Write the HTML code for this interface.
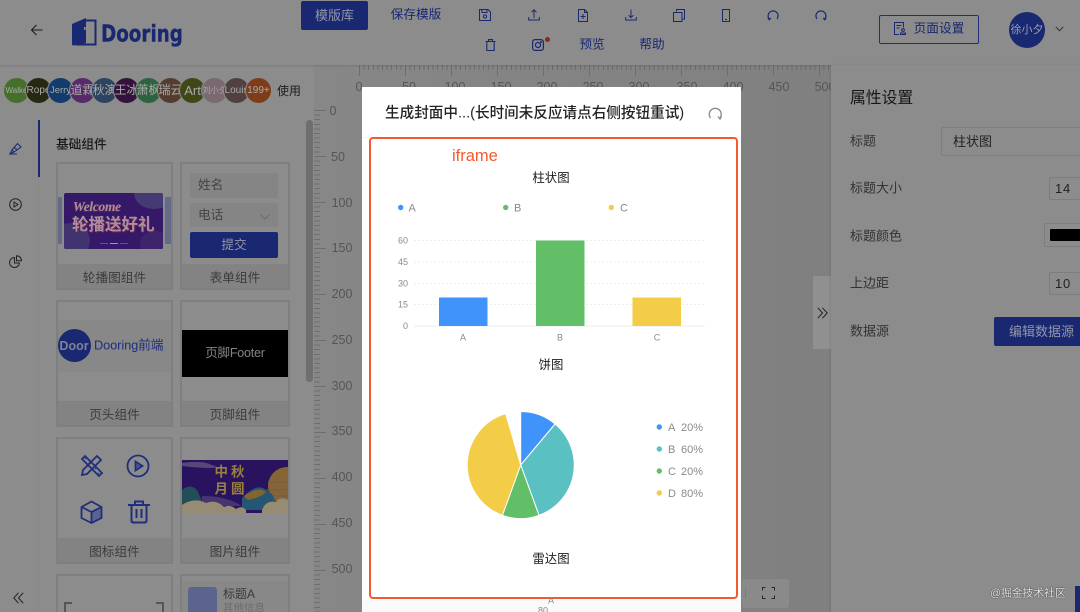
<!DOCTYPE html>
<html><head><meta charset="utf-8">
<style>
*{box-sizing:border-box;margin:0;padding:0}
html,body{width:1080px;height:612px;overflow:hidden;background:#8c8c8c;font-family:"Liberation Sans","Noto Sans CJK SC",sans-serif}
#root{position:relative;width:1080px;height:612px;overflow:hidden;background:#8c8c8c;filter:blur(.35px)}
.a{position:absolute;white-space:nowrap}
.t{position:absolute;white-space:nowrap;line-height:1;transform:translate(-50%,-50%)}
.l{position:absolute;white-space:nowrap;line-height:1;transform:translateY(-50%)}
.blue{color:#192870}
.card{position:absolute;border:2px solid #7f7f7f;background:#8c8c8c;overflow:hidden}
.strip{position:absolute;left:0;right:0;bottom:0;height:24px;background:#838383;color:#3c3c3c;font-size:12.7px;text-align:center;line-height:28px}
.av{position:absolute;top:77px;width:27px;height:27px;border-radius:50%;border:1px solid #8c8c8c;color:#aaa;font-size:11px;line-height:25px;overflow:hidden;text-align:center;white-space:nowrap}
svg{position:absolute;overflow:visible}
.rl{position:absolute;font-size:12.5px;color:#555;line-height:1;transform:translate(-50%,-50%)}
.gy{color:#333;font-size:13px}
.inp{position:absolute;border:1px solid #7d7d7d;border-radius:2px;background:#8c8c8c;color:#222;font-size:13px}
</style></head><body><div id="root">

<!-- canvas -->
<div class="a" style="left:314px;top:65px;width:517px;height:547px;background:linear-gradient(90deg,#878787,#828282 70%,#808080)"></div>

<!-- top ruler -->
<div class="a" style="left:359px;top:65px;width:472px;height:5px;background:repeating-linear-gradient(90deg,#6d6d6d 0 1px,transparent 1px 4.6px)"></div>
<div class="a" style="left:359px;top:65px;width:472px;height:11px;background:repeating-linear-gradient(90deg,#6d6d6d 0 1px,transparent 1px 46px)"></div>
<div class="rl" style="left:359px;top:87px">0</div><div class="rl" style="left:409px;top:87px">50</div><div class="rl" style="left:455px;top:87px">100</div><div class="rl" style="left:501px;top:87px">150</div><div class="rl" style="left:547px;top:87px">200</div><div class="rl" style="left:593px;top:87px">250</div><div class="rl" style="left:639px;top:87px">300</div><div class="rl" style="left:687px;top:87px">350</div><div class="rl" style="left:733px;top:87px">400</div><div class="rl" style="left:779px;top:87px">450</div><div class="rl" style="left:825px;top:87px;clip-path:inset(0 5px 0 0)">500</div>

<!-- left ruler -->
<div class="a" style="left:314px;top:110px;width:6px;height:502px;background:repeating-linear-gradient(180deg,#6f6f6f 0 1px,transparent 1px 4.6px)"></div>
<div class="a" style="left:314px;top:110px;width:12px;height:502px;background:repeating-linear-gradient(180deg,#6f6f6f 0 1px,transparent 1px 46px)"></div>
<div class="rl" style="left:333px;top:111px">0</div><div class="rl" style="left:338px;top:157px">50</div><div class="rl" style="left:342px;top:203px">100</div><div class="rl" style="left:342px;top:248px">150</div><div class="rl" style="left:342px;top:294px">200</div><div class="rl" style="left:342px;top:340px">250</div><div class="rl" style="left:342px;top:386px">300</div><div class="rl" style="left:342px;top:431px">350</div><div class="rl" style="left:342px;top:477px">400</div><div class="rl" style="left:342px;top:523px">450</div><div class="rl" style="left:342px;top:569px">500</div>

<!-- left panel -->
<div class="a" style="left:0;top:65px;width:314px;height:547px;background:#8c8c8c"></div>
<div class="a" style="left:38px;top:120px;width:1px;height:492px;background:#888"></div>
<div class="a" style="left:38px;top:120px;width:2px;height:57px;background:#192870"></div>
<div class="a" style="left:306px;top:120px;width:7px;height:262px;background:#6f6f6f;border-radius:4px"></div>

<!-- header -->
<div class="a" style="left:0;top:0;width:1080px;height:65px;background:#8c8c8c;box-shadow:0 1px 2px rgba(0,0,0,.12)"></div>

<svg style="left:30px;top:23px" width="14" height="14" viewBox="0 0 14 14" fill="none" stroke="#1c1c1c" stroke-width="1.1"><path d="M12.5 7H1.5M6.5 2L1.5 7l5 5"/></svg>
<svg style="left:72px;top:18px" width="25" height="28" viewBox="0 0 25 28"><path d="M12 2.500h11.500V26.500H4" fill="none" stroke="#192870" stroke-width="2"/><path d="M0 6L14 0V25L2 27.500Q0 27.500 0 26Z" fill="#192870"/><rect x="12" y="9" width="1.600" height="3" fill="#8c8c8c"/></svg>
<div class="l blue" style="left:101px;top:34px;font-size:23.500px;font-weight:bold;font-family:'DejaVu Sans','Liberation Sans',sans-serif;-webkit-text-stroke:.4px #192870;transform:translateY(-50%) scaleX(.78);transform-origin:left center">Dooring</div>

<div class="a" style="left:301px;top:1px;width:67px;height:29px;background:#192870;border-radius:2px;color:#9296aa;font-size:13px;text-align:center;line-height:29px">模版库</div>
<div class="t blue" style="left:416px;top:15px;font-size:12.700px">保存模版</div>

<svg style="left:479px;top:9px" width="12" height="12" viewBox="0 0 12 12" fill="none" stroke="#192870" stroke-width="1"><path d="M.5.500h8.500l2.500 2.500v8.500H.5zM3 .5V3.500h5V.5"/><circle cx="6" cy="7.500" r="1.600"/></svg>
<svg style="left:528px;top:9px" width="12" height="12" viewBox="0 0 12 12" fill="none" stroke="#192870" stroke-width="1"><path d="M6 9V1M3.500 3.200L6 .8l2.500 2.400M.7 8v3h10.600V8"/></svg>
<svg style="left:578px;top:9px" width="10" height="13" viewBox="0 0 10 13" fill="none" stroke="#192870" stroke-width="1"><path d="M.5.500h6l3 3v9H.5zM6.500.5v3h3M5 5v5M2.500 7.500h5"/></svg>
<svg style="left:625px;top:9px" width="12" height="12" viewBox="0 0 12 12" fill="none" stroke="#192870" stroke-width="1"><path d="M6 .5v8M3.500 6.200L6 8.700l2.500-2.500M.7 8v3h10.600V8"/></svg>
<svg style="left:673px;top:9px" width="12" height="13" viewBox="0 0 12 13" fill="none" stroke="#192870" stroke-width="1"><path d="M3.500 2.500V.5h8v9.500h-2M.5 3.500h8.500v9H.5z"/></svg>
<svg style="left:722px;top:9px" width="8" height="13" viewBox="0 0 8 13" fill="none" stroke="#192870" stroke-width="1"><rect x=".5" y=".5" width="7" height="12"/><path d="M3 10.500h2"/></svg>
<svg style="left:767px;top:9px" width="12" height="12" viewBox="0 0 12 12" fill="none" stroke="#192870" stroke-width="1.200"><path d="M2.200 10A5 5 0 1 1 10 10"/><path d="M.8 8.500L2.200 10.800 3.800 9"/></svg>
<svg style="left:815px;top:9px" width="12" height="12" viewBox="0 0 12 12" fill="none" stroke="#192870" stroke-width="1.200"><path d="M2 10A5 5 0 1 1 9.800 10"/><path d="M8.200 9L9.800 10.800 11.200 8.500"/></svg>

<svg style="left:485px;top:39px" width="11" height="12" viewBox="0 0 11 12" fill="none" stroke="#192870" stroke-width="1.100"><path d="M.5 2.500h10M3.500 2.500V.6h4v1.900M1.800 2.500v9h7.400v-9"/></svg>
<svg style="left:532px;top:39px" width="12" height="12" viewBox="0 0 12 12" fill="none" stroke="#192870" stroke-width="1.200"><rect x=".6" y=".6" width="10.800" height="10.800" rx="2.500"/><circle cx="6" cy="6" r="2.500"/><circle cx="9" cy="3" r=".4"/></svg>
<div class="a" style="left:545px;top:37px;width:5px;height:5px;border-radius:50%;background:#8f2424"></div>
<div class="t blue" style="left:592px;top:45px;font-size:12.700px">预览</div>
<div class="t blue" style="left:652px;top:45px;font-size:12.700px">帮助</div>

<div class="a" style="left:879px;top:15px;width:100px;height:29px;border:1px solid #1f2f7c;border-radius:2px"></div>
<svg style="left:894px;top:22px" width="12" height="13" viewBox="0 0 12 13" fill="none" stroke="#192870" stroke-width="1"><path d="M5 12.500H.5V.5h9v5M2.500 3.500h5M2.500 6h3"/><circle cx="9" cy="8" r="1.400"/><path d="M6.500 12.500v-1.500h5v1.500z"/></svg>
<div class="t blue" style="left:939px;top:29px;font-size:12.700px">页面设置</div>
<div class="a" style="left:1009px;top:12px;width:36px;height:36px;border-radius:50%;background:#192870;color:#9a9eb0;font-size:11px;line-height:36px;text-align:center">徐小夕</div>
<svg style="left:1055px;top:26px" width="9" height="6" viewBox="0 0 9 6" fill="none" stroke="#333" stroke-width="1"><path d="M.8.800L4.500 4.800 8.200.800"/></svg>

<!-- avatars -->
<div class="av" style="left:3px;background:#456f2a;font-size:8px">Walke</div>
<div class="av" style="left:25px;background:#262812;font-size:10px">Rope</div>
<div class="av" style="left:47px;background:#133b6c;font-size:9.500px">Jerry</div>
<div class="av" style="left:69px;background:#552b69;font-size:12px">道霖</div>
<div class="av" style="left:91px;background:#2c445f;font-size:12px">秋演</div>
<div class="av" style="left:113px;background:#35123b;font-size:12px">王冰</div>
<div class="av" style="left:135px;background:#2e633f;font-size:12px">萧枫</div>
<div class="av" style="left:157px;background:#543d30;font-size:12px">瑞云</div>
<div class="av" style="left:179px;background:#404717;font-size:13px">Art</div>
<div class="av" style="left:201px;background:#7a6971;font-size:8px">刘小夕</div>
<div class="av" style="left:223px;background:#524041;font-size:10px">Louis</div>
<div class="av" style="left:245px;background:#7e3d18;font-size:10px">199+</div>
<div class="l" style="left:277px;top:91px;font-size:12px;color:#1e1e1e">使用</div>

<!-- side icons -->
<svg style="left:9px;top:142px" width="13" height="13" viewBox="0 0 13 13" fill="none" stroke="#192870" stroke-width="1"><path d="M3 8L8.500 1.500 12 5 5 10zM1 12L3 8l2 2zM1 12h7M5 5l3 3"/></svg>
<svg style="left:9px;top:198px" width="13" height="13" viewBox="0 0 13 13" fill="none" stroke="#222" stroke-width="1"><circle cx="6.500" cy="6.500" r="5.800"/><path d="M5 4l4 2.500-4 2.500z"/></svg>
<svg style="left:9px;top:255px" width="13" height="13" viewBox="0 0 13 13" fill="none" stroke="#222" stroke-width="1"><path d="M5.500 2.500a5 5 0 1 0 5 5.500H5.500z"/><path d="M7.500.7a5 5 0 0 1 5 5h-5z"/></svg>
<svg style="left:13px;top:592px" width="11" height="12" viewBox="0 0 11 12" fill="none" stroke="#222" stroke-width="1"><path d="M5.500.8L.8 6l4.700 5.200M10.200.8L5.500 6l4.700 5.200"/></svg>

<div class="l" style="left:56px;top:145px;font-size:12.700px;color:#1a1a1a;font-weight:500">基础组件</div>

<!-- card 1 -->
<div class="card" style="left:56px;top:162px;width:117px;height:128px"><div class="strip">轮播图组件</div></div>
<div class="a" style="left:58px;top:197px;width:4px;height:47px;background:#656a86;border-radius:1px"></div>
<div class="a" style="left:165px;top:197px;width:6px;height:47px;background:#656a86;border-radius:1px"></div>
<div class="a" style="left:64px;top:193px;width:99px;height:56px;background:#361868;border-radius:2px;overflow:hidden">
 <div class="a" style="left:70px;top:-16px;width:40px;height:32px;border-radius:50%;background:#463a75"></div>
 <div class="a" style="left:-14px;top:30px;width:40px;height:36px;border-radius:50%;background:#413270"></div>
 <div class="a" style="left:76px;top:38px;width:30px;height:26px;border-radius:50%;background:#3d246b"></div>
 <div class="a" style="left:9px;top:6px;font:italic bold 13.500px 'Liberation Serif',serif;color:#9d93a3;text-shadow:-1px 1px 0 #7a1f4b;letter-spacing:-.3px">Welcome</div>
 <div class="a" style="left:8px;top:24px;font-size:16.500px;font-weight:bold;line-height:1;color:#a8919f;text-shadow:1px 1px 0 #7a1f4b">轮播送好礼</div>
 <div class="a" style="left:36px;top:50px;width:8px;height:1px;background:#62547e"></div><div class="a" style="left:46px;top:50px;width:8px;height:1px;background:#9c9c9c"></div><div class="a" style="left:56px;top:50px;width:8px;height:1px;background:#62547e"></div>
</div>

<!-- card 2 -->
<div class="card" style="left:180px;top:162px;width:110px;height:128px"><div class="strip">表单组件</div></div>
<div class="a" style="left:190px;top:173px;width:88px;height:25px;background:#858585;color:#444;font-size:12.700px;line-height:25px;padding-left:8px">姓名</div>
<div class="a" style="left:190px;top:203px;width:88px;height:24px;background:#858585;color:#444;font-size:12.700px;line-height:24px;padding-left:8px">电话</div>
<svg style="left:260px;top:214px" width="10" height="6" viewBox="0 0 10 6" fill="none" stroke="#6a6a6a" stroke-width="1"><path d="M.5.500L5 5 9.500.500"/></svg>
<div class="a" style="left:190px;top:232px;width:88px;height:26px;background:#192870;border-radius:2px;color:#9296aa;font-size:12.700px;line-height:26px;text-align:center">提交</div>

<!-- card 3 -->
<div class="card" style="left:56px;top:300px;width:117px;height:127px"><div class="strip">页头组件</div></div>
<div class="a" style="left:58px;top:320px;width:113px;height:52px;background:#888"></div>
<div class="a" style="left:58px;top:329px;width:33px;height:33px;border-radius:50%;background:#192870"></div>
<div class="t" style="left:74px;top:346px;font-size:12.500px;font-weight:bold;color:#7d8399">Door</div>
<div class="l" style="left:94px;top:346px;font-size:12.800px;letter-spacing:-.1px;color:#1f2f7c">Dooring前端</div>

<!-- card 4 -->
<div class="card" style="left:180px;top:300px;width:110px;height:127px"><div class="strip">页脚组件</div></div>
<div class="a" style="left:182px;top:330px;width:106px;height:47px;background:#000;color:#858585;font-size:12.500px;line-height:47px;text-align:center;letter-spacing:-.2px">页脚Footer</div>

<!-- card 5 -->
<div class="card" style="left:56px;top:437px;width:117px;height:127px"><div class="strip">图标组件</div></div>
<svg style="left:80px;top:454px" width="23" height="23" viewBox="0 0 23 23" fill="none" stroke="#1f2f7c" stroke-width="1.800"><path d="M2 5l3-3 17 17-3 3z"/><path d="M17 2l4 4L7 20l-5 1 1-5z"/><path d="M7 3l-2 2M11 7l-2 2M15 15l2-2M19 19l-2 2" stroke-width="1.200"/></svg>
<svg style="left:126px;top:454px" width="24" height="24" viewBox="0 0 24 24" fill="none" stroke="#1f2f7c" stroke-width="1.800"><circle cx="12" cy="12" r="10.500"/><path d="M9.500 7.500l7 4.500-7 4.500z" fill="#4a568f"/></svg>
<svg style="left:80px;top:500px" width="23" height="24" viewBox="0 0 23 24" fill="none" stroke="#1f2f7c" stroke-width="1.800"><path d="M11.500 12l10-5v11l-10 5z" fill="#5a648f" stroke="none"/><path d="M11.500 1.500L21.500 7v11l-10 5-10-5V7zM1.500 7l10 5 10-5M11.500 12v11"/></svg>
<svg style="left:128px;top:500px" width="22" height="24" viewBox="0 0 22 24" fill="none" stroke="#1f2f7c" stroke-width="2"><path d="M0 5h22M7 5V1.500h8V5M3.500 5v15.500q0 2 2 2h11q2 0 2-2V5M8.500 9v9M13.500 9v9"/></svg>

<!-- card 6 -->
<div class="card" style="left:180px;top:437px;width:110px;height:127px"><div class="strip">图片组件</div></div>
<svg style="left:182px;top:460px;overflow:hidden" width="106" height="53" viewBox="0 0 106 53">
<rect width="106" height="53" fill="#29135e"/>
<path d="M0 3q20-3 30 2 8 2 0 3-15 0-30-2z" fill="#564778"/>
<circle cx="105" cy="26" r="19" fill="#866534"/>
<path d="M86 22h20M84 30h22M88 36h18" stroke="#6f5b58" stroke-width="1"/>
<path d="M0 30q10-8 16 2l6 14H0z" fill="#224f57"/>
<path d="M20 36q25 0 40 10H20z" fill="#463571"/>
<path d="M60 38q15-16 24-8l6 4 4 8-14 8H60z" fill="#255775"/>
<path d="M62 36q14-10 22-4-6 6-18 8z" fill="#836532"/>
<path d="M0 45q12-8 24-2 10-4 18 4 6-3 12 2 6-4 10 1v3H0zM80 50q4-10 14-8 4-6 12-2v13H80z" fill="#968c74"/>
</svg>
<div class="t" style="left:231px;top:472px;font-size:13.500px;font-weight:bold;color:#97813f;letter-spacing:3px">中秋</div>
<div class="t" style="left:231px;top:489px;font-size:13.500px;font-weight:bold;color:#97813f;letter-spacing:3px">月圆</div>

<!-- card 7/8 -->
<div class="card" style="left:56px;top:574px;width:117px;height:60px"></div>
<svg style="left:64px;top:602px" width="100" height="10" fill="none" stroke="#555" stroke-width="2"><path d="M1 10V1h7M99 10V1h-7"/></svg>
<div class="card" style="left:180px;top:574px;width:110px;height:60px"></div>
<div class="a" style="left:182px;top:581px;width:106px;height:31px;background:#888"></div>
<div class="a" style="left:188px;top:587px;width:29px;height:25px;background:#5a648c;border-radius:3px 3px 0 0"></div>
<div class="l" style="left:223px;top:594px;font-size:12px;color:#3a3a3a">标题A</div>
<div class="l" style="left:223px;top:608px;font-size:10.500px;color:#6c6c6c">其他信息</div>

<!-- right panel -->
<div class="a" style="left:813px;top:276px;width:18px;height:73px;background:#909090"></div>
<svg style="left:817px;top:307px" width="11" height="12" viewBox="0 0 11 12" fill="none" stroke="#222" stroke-width="1"><path d="M.8.800L5.500 6 .8 11.200M5.500.800L10.200 6 5.500 11.200"/></svg>
<div class="a" style="left:831px;top:65px;width:249px;height:547px;background:#8c8c8c;box-shadow:-1px 0 2px rgba(0,0,0,.1)"></div>
<div class="l" style="left:850px;top:99px;font-size:15.800px;color:#161616">属性设置</div>
<div class="l gy" style="left:850px;top:141px">标题</div>
<div class="inp" style="left:941px;top:127px;width:145px;height:29px;line-height:27px;padding-left:11px">柱状图</div>
<div class="l gy" style="left:850px;top:188px">标题大小</div>
<div class="inp" style="left:1049px;top:177px;width:40px;height:23px;line-height:21px;padding-left:5px;letter-spacing:.8px">14</div>
<div class="l gy" style="left:850px;top:236px">标题颜色</div>
<div class="inp" style="left:1044px;top:223px;width:50px;height:24px"></div>
<div class="a" style="left:1050px;top:229px;width:40px;height:12px;background:#000;border-radius:1px"></div>
<div class="l gy" style="left:850px;top:283px">上边距</div>
<div class="inp" style="left:1049px;top:272px;width:40px;height:23px;line-height:21px;padding-left:5px;letter-spacing:.8px">10</div>
<div class="l gy" style="left:850px;top:331px">数据源</div>
<div class="a" style="left:994px;top:317px;width:90px;height:29px;background:#192870;border-radius:2px;color:#9296aa;font-size:13px;line-height:29px;padding-left:15px">编辑数据源</div>

<!-- bottom right -->
<div class="a" style="left:742px;top:579px;width:47px;height:29px;background:#8a8a8a;border-radius:3px"></div>
<div class="a" style="left:745px;top:588px;width:1px;height:10px;background:#7b7b7b"></div>
<svg style="left:762px;top:587px" width="13" height="12" fill="none" stroke="#2a2a2a" stroke-width="1"><path d="M.5 3.500V.5h3M9.500.5h3v3M12.500 8.500v3h-3M3.500 11.500h-3v-3"/></svg>
<div class="l" style="left:990px;top:594px;font-size:10.800px;color:#e4e4e4;text-shadow:0 0 1px #333,0 0 1px #333">@掘金技术社区</div>
<div class="a" style="left:1075px;top:586px;width:5px;height:26px;background:#192870"></div>

<!-- modal -->
<div class="a" style="left:362px;top:87px;width:379px;height:525px;background:#fff"></div>
<div class="a" style="left:362px;top:137px;width:379px;height:1px;background:#f2f2f2"></div>
<div class="a" style="left:362px;top:600px;width:379px;height:12px;background:#fafafa"></div>
<div class="l" style="left:385px;top:114px;font-size:14.600px;font-weight:500;color:#222">生成封面中...(长时间未反应请点右侧按钮重试)</div>
<svg style="left:708px;top:106px" width="14" height="14" viewBox="0 0 14 14" fill="none" stroke="#8a8a8a" stroke-width="1.300"><path d="M2.500 12A6 6 0 1 1 12 12"/><path d="M10 10.500L12 13 13.500 10.500"/></svg>
<div class="a" style="left:369px;top:137px;width:369px;height:462px;border:2px solid #f45a2e;border-radius:4px"></div>
<div class="l" style="left:452px;top:156px;font-size:16.500px;color:#f45a2e">iframe</div>

<div class="t" style="left:551px;top:178px;font-size:12.400px;color:#1c1c1c">柱状图</div>
<svg style="left:362px;top:190px" width="379" height="160" viewBox="362 190 379 160">
<g stroke="#ededed" stroke-dasharray="2 2"><path d="M414 240.500H705M414 262H705M414 283.500H705M414 304.500H705"/></g>
<path d="M414 326H705" stroke="#eee"/>
<rect x="439" y="297.500" width="48.500" height="28.500" fill="#3f93fb"/>
<rect x="536" y="240.500" width="48.500" height="85.500" fill="#62bf68"/>
<rect x="632.500" y="297.500" width="48.500" height="28.500" fill="#f3cc48"/>
<circle cx="400.700" cy="207.500" r="2.700" fill="#3f93fb"/><circle cx="505.700" cy="207.500" r="2.700" fill="#62bf68"/><circle cx="611.300" cy="207.500" r="2.700" fill="#f3cc48"/>
<g font-family="Liberation Sans" font-size="11" fill="#8a8a8a"><text x="408.500" y="211.500">A</text><text x="514" y="211.500">B</text><text x="620" y="211.500">C</text></g>
<g font-family="Liberation Sans" font-size="9" fill="#8a8a8a" text-anchor="end"><text x="408" y="243.500">60</text><text x="408" y="265">45</text><text x="408" y="286.500">30</text><text x="408" y="307.500">15</text><text x="408" y="329">0</text></g>
<g font-family="Liberation Sans" font-size="9" fill="#8a8a8a" text-anchor="middle"><text x="463" y="340.500">A</text><text x="560" y="340.500">B</text><text x="657" y="340.500">C</text></g>
</svg>

<div class="t" style="left:551px;top:365px;font-size:12.400px;color:#1c1c1c">饼图</div>
<svg style="left:462px;top:408px" width="120" height="115" viewBox="462 408 120 115" stroke="#fff" stroke-width="1">
<path d="M520.700 465V411.500A53.500 53.500 0 0 1 555.100 424Z" fill="#3f93fb"/>
<path d="M520.700 465L555.100 424A53.500 53.500 0 0 1 539 515.300Z" fill="#5ac0c2"/>
<path d="M520.700 465L539 515.300A53.500 53.500 0 0 1 502.400 515.300Z" fill="#62bf68"/>
<path d="M520.700 465L502.400 515.300A53.500 53.500 0 0 1 505.600 413.700Z" fill="#f3cc48"/>
</svg>
<svg style="left:650px;top:415px" width="70" height="90" viewBox="650 415 70 90">
<circle cx="659.300" cy="427" r="2.700" fill="#3f93fb"/><circle cx="659.300" cy="449" r="2.700" fill="#5ac0c2"/><circle cx="659.300" cy="471" r="2.700" fill="#62bf68"/><circle cx="659.300" cy="493" r="2.700" fill="#f3cc48"/>
<g font-family="Liberation Sans" font-size="11" fill="#8a8a8a"><text x="668" y="431">A</text><text x="681" y="431">20%</text><text x="668" y="453">B</text><text x="681" y="453">60%</text><text x="668" y="475">C</text><text x="681" y="475">20%</text><text x="668" y="497">D</text><text x="681" y="497">80%</text></g>
</svg>
<div class="t" style="left:551px;top:559px;font-size:12.400px;color:#1c1c1c">雷达图</div>
<div class="t" style="left:551px;top:601px;font-size:9px;color:#8a8a8a">A</div>
<div class="t" style="left:543px;top:611px;font-size:9px;color:#8a8a8a">80</div>
</div></body></html>
